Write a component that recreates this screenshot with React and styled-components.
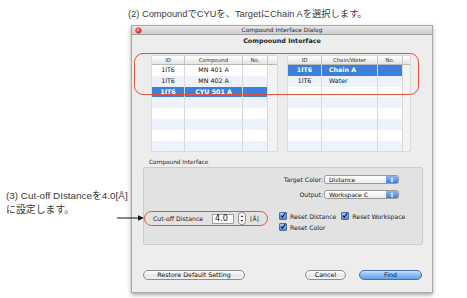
import React from "react";
import styled, { createGlobalStyle } from "styled-components";

const GlobalStyle = createGlobalStyle`
    html, body {
        margin: 0;
        padding: 0;
        background: #fff;
    }
`;

const ui = `"Lucida Grande", "DejaVu Sans", "Liberation Sans", sans-serif`;
const jp = `"Liberation Sans", "Noto Sans CJK JP", sans-serif`;

const Page = styled.div`
    position: relative;
    width: 467px;
    height: 298px;
    overflow: hidden;
    background: #fff;
`;

const Caption = styled.div`
    font-family: ${jp};
    font-size: 9.3px;
    color: #3a3a3a;
    padding: 9px 0 0 128px;
    height: 16px;
    line-height: 10px;
    white-space: nowrap;
`;

const Main = styled.div`
    display: flex;
`;

const Note = styled.div`
    width: 125px;
    padding: 164px 0 0 6px;
    font-family: ${jp};
    font-size: 9.9px;
    line-height: 13.5px;
    color: #3a3a3a;
    white-space: nowrap;
`;

const Arrow = styled.svg`
    position: absolute;
    left: 116px;
    top: 214px;
`;

const Dialog = styled.div`
    position: relative;
    width: 300px;
    height: 266px;
    background: #ededed;
    border: 1px solid #a9a9a9;
    box-shadow: 0 2px 4px rgba(0, 0, 0, 0.35);
    font-family: ${ui};
    display: flex;
    flex-direction: column;
`;

const TitleBar = styled.div`
    position: relative;
    height: 8px;
    background: linear-gradient(#e8e8e8, #cdcdcd);
    border-bottom: 1px solid #a0a0a0;
    font-size: 5.9px;
    line-height: 8px;
    text-align: center;
    color: #2a2a2a;
`;

const CloseDot = styled.span`
    position: absolute;
    left: 4px;
    top: 1.5px;
    width: 5px;
    height: 5px;
    border-radius: 50%;
    background: radial-gradient(circle at 40% 35%, #ff9c8e, #d2261c 70%);
    box-shadow: 0 0 0 0.5px #8a1a12;
`;

const Heading = styled.div`
    height: 14px;
    line-height: 13px;
    text-align: center;
    font-size: 6.4px;
    font-weight: bold;
    color: #222;
`;

const Tables = styled.div`
    display: flex;
    gap: 11px;
    margin: 7px 0 0 20px;
`;

const Table = styled.div`
    display: flex;
    flex-direction: column;
    width: ${p => p.$width}px;
    background: #fff;
    box-shadow: 0 0 0 0.5px #c9c9c9;
`;

const HeadRow = styled.div`
    display: flex;
    height: 8px;
    background: linear-gradient(#ffffff, #e4e4e4);
    border-bottom: 1px solid #b9b9b9;
    font-size: 5.4px;
    line-height: 8px;
    color: #333;
`;

const Row = styled.div`
    display: flex;
    height: 10.8px;
    background: ${p => (p.$selected ? "#3c7fdd" : p.$odd ? "#eef3fb" : "#fff")};
    color: ${p => (p.$selected ? "#fff" : "#111")};
    font-size: 6.3px;
    line-height: 10.8px;
    font-weight: ${p => (p.$selected ? "bold" : "normal")};
`;

const Cell = styled.div`
    width: ${p => p.$width}px;
    flex: none;
    text-align: ${p => p.$align || "center"};
    padding-left: ${p => p.$pad || 0}px;
    box-sizing: border-box;
    border-right: 1px solid ${p => (p.$head ? "#c4c4c4" : "#d8d8d8")};
    white-space: nowrap;
    overflow: hidden;
`;

const Scroll = styled.div`
    flex: 1;
    background: ${p => (p.$head ? "transparent" : "#f3f3f3")};
`;

const TableMark = styled.div`
    position: absolute;
    left: 2px;
    top: 27px;
    width: 283px;
    height: 40px;
    border: 1px solid #e2533f;
    border-radius: 9px;
    pointer-events: none;
`;

const GroupLabel = styled.div`
    margin: 8px 0 0 17px;
    height: 7px;
    font-size: 5.8px;
    line-height: 7px;
    color: #222;
`;

const Group = styled.div`
    margin: 1px 0 0 11px;
    width: 278px;
    height: 76px;
    background: #e2e2e2;
    border: 1px solid #cbcbcb;
    border-radius: 2px;
    display: flex;
    flex-direction: column;
`;

const FieldRow = styled.div`
    display: flex;
    justify-content: flex-end;
    align-items: center;
    padding-right: 23px;
    margin-top: ${p => p.$top}px;
    height: 9px;
    font-size: 6.2px;
    color: #222;
`;

const FieldLabel = styled.span`
    margin-right: 1px;
`;

const Popup = styled.div`
    position: relative;
    width: 75px;
    height: 9px;
    box-sizing: border-box;
    border: 1px solid #9a9a9a;
    border-radius: 2.5px;
    background: linear-gradient(#ffffff, #ececec);
    font-size: 6px;
    line-height: 7px;
    padding-left: 4px;
    color: #111;
    overflow: hidden;
`;

const PopupKnob = styled.span`
    position: absolute;
    right: 0;
    top: 0;
    bottom: 0;
    width: 12px;
    background: linear-gradient(#8fb8f0, #3f7fd8);
    display: flex;
    align-items: center;
    justify-content: center;
`;

const Bottom = styled.div`
    display: flex;
    margin-top: 12px;
`;

const CutoffBox = styled.div`
    display: flex;
    align-items: center;
    width: 124px;
    height: 15px;
    box-sizing: border-box;
    border: 1px solid #e2533f;
    border-radius: 8px;
    padding-left: 8px;
    font-size: 6.2px;
    color: #222;
`;

const NumInput = styled.div`
    width: 22px;
    height: 10px;
    box-sizing: border-box;
    margin-left: 9px;
    background: #fff;
    border: 1px solid #a0a0a0;
    font-size: 8px;
    line-height: 8px;
    padding-left: 2px;
    color: #111;
`;

const Stepper = styled.svg`
    margin-left: 4px;
`;

const Unit = styled.span`
    margin-left: 4px;
    font-size: 6px;
`;

const Checks = styled.div`
    display: flex;
    flex-direction: column;
    gap: 3px;
    margin: 1px 0 0 11px;
`;

const CheckRow = styled.div`
    display: flex;
    gap: 5px;
`;

const Check = styled.label`
    display: flex;
    align-items: center;
    gap: 3px;
    font-size: 6.2px;
    color: #222;
    white-space: nowrap;
`;

const Box = styled.span`
    width: 6px;
    height: 6px;
    border: 0.5px solid #4a6ea8;
    border-radius: 1px;
    background: linear-gradient(#a7c7f3, #4b86dc);
    display: flex;
`;

const Buttons = styled.div`
    display: flex;
    align-items: center;
    margin: 25px 0 0 11px;
`;

const Button = styled.div`
    width: ${p => p.$width}px;
    height: 10px;
    box-sizing: border-box;
    margin-left: ${p => p.$gap || 0}px;
    border: 1px solid ${p => (p.$primary ? "#4b6ea6" : "#8c8c8c")};
    border-radius: 6px;
    background: ${p =>
        p.$primary
            ? "linear-gradient(#c9e0fa, #84b8f2 55%, #62a3ec)"
            : "linear-gradient(#ffffff, #e6e6e6 60%, #f4f4f4)"};
    font-size: 6.3px;
    line-height: 8px;
    text-align: center;
    color: #111;
`;

function Tick() {
    return (
        <svg width="7" height="7" viewBox="0 0 7 7" style={{ marginTop: -1 }}>
            <path d="M1.2 3.6 L2.8 5.4 L6.2 0.8" fill="none" stroke="#0c1a3a" strokeWidth="1.3" />
        </svg>
    );
}

function CheckItem({ children }) {
    return (
        <Check>
            <Box><Tick /></Box>
            {children}
        </Check>
    );
}

function Arrows() {
    return (
        <svg width="4" height="6" viewBox="0 0 4 6">
            <path d="M0.3 2.4 L2 0.5 L3.7 2.4Z M0.3 3.6 L2 5.5 L3.7 3.6Z" fill="#fff" />
        </svg>
    );
}

function ListTable({ width, cols, rows, selected }) {
    const body = [];
    for (let i = 0; i < 8; i++) {
        const r = rows[i];
        body.push(
            <Row key={i} $odd={i % 2 === 1} $selected={i === selected}>
                {cols.map((c, j) => (
                    <Cell key={j} $width={c.w} $align={c.align} $pad={c.pad}>
                        {r ? r[j] : ""}
                    </Cell>
                ))}
                <Scroll />
            </Row>
        );
    }
    return (
        <Table $width={width}>
            <HeadRow>
                {cols.map((c, j) => (
                    <Cell key={j} $width={c.w} $head>{c.title}</Cell>
                ))}
                <Scroll $head />
            </HeadRow>
            {body}
        </Table>
    );
}

const leftCols = [
    { title: "ID", w: 33 },
    { title: "Compound", w: 58 },
    { title: "No.", w: 25 },
];

const rightCols = [
    { title: "ID", w: 34 },
    { title: "Chain/Water", w: 56, align: "left", pad: 7 },
    { title: "No.", w: 25 },
];

export default function App() {
    return (
        <Page>
            <GlobalStyle />
            <Caption>(2) CompoundでCYUを、TargetにChain Aを選択します。</Caption>
            <Main>
                <Note>
                    (3) Cut-off DIstanceを4.0[Å]
                    <br />
                    に設定します。
                </Note>
                <Dialog>
                    <TitleBar>
                        <CloseDot />
                        Compound Interface Dialog
                    </TitleBar>
                    <Heading>Compoound Interface</Heading>
                    <Tables>
                        <ListTable
                            width={125}
                            cols={leftCols}
                            selected={2}
                            rows={[
                                ["1IT6", "MN  401 A", ""],
                                ["1IT6", "MN  402 A", ""],
                                ["1IT6", "CYU  501 A", ""],
                            ]}
                        />
                        <ListTable
                            width={122}
                            cols={rightCols}
                            selected={0}
                            rows={[
                                ["1IT6", "Chain A", ""],
                                ["1IT6", "Water", ""],
                            ]}
                        />
                    </Tables>
                    <TableMark />
                    <GroupLabel>Compound Interface</GroupLabel>
                    <Group>
                        <FieldRow $top={7}>
                            <FieldLabel>Target Color:</FieldLabel>
                            <Popup>
                                Distance
                                <PopupKnob><Arrows /></PopupKnob>
                            </Popup>
                        </FieldRow>
                        <FieldRow $top={6}>
                            <FieldLabel>Output:</FieldLabel>
                            <Popup>
                                Workspace C
                                <PopupKnob><Arrows /></PopupKnob>
                            </Popup>
                        </FieldRow>
                        <Bottom>
                            <CutoffBox>
                                Cut-off Distance
                                <NumInput>4.0</NumInput>
                                <Stepper width="8" height="13" viewBox="0 0 8 13">
                                    <rect x="0.5" y="0.5" width="7" height="12" rx="3" fill="#f7f7f7" stroke="#8d8d8d" />
                                    <path d="M2.6 5 L4 3.2 L5.4 5Z M2.6 8 L4 9.8 L5.4 8Z" fill="#333" />
                                </Stepper>
                                <Unit>[Å]</Unit>
                            </CutoffBox>
                            <Checks>
                                <CheckRow>
                                    <CheckItem>Reset Distance</CheckItem>
                                    <CheckItem>Reset Workspace</CheckItem>
                                </CheckRow>
                                <CheckRow>
                                    <CheckItem>Reset Color</CheckItem>
                                </CheckRow>
                            </Checks>
                        </Bottom>
                    </Group>
                    <Buttons>
                        <Button $width={102}>Restore Default Setting</Button>
                        <Button $width={41} $gap={60}>Cancel</Button>
                        <Button $width={63} $gap={13} $primary>Find</Button>
                    </Buttons>
                </Dialog>
            </Main>
            <Arrow width="30" height="8" viewBox="0 0 30 8">
                <line x1="1" y1="4" x2="24" y2="4" stroke="#111" strokeWidth="1" />
                <path d="M22 1.2 L28 4 L22 6.8Z" fill="#111" />
            </Arrow>
        </Page>
    );
}
